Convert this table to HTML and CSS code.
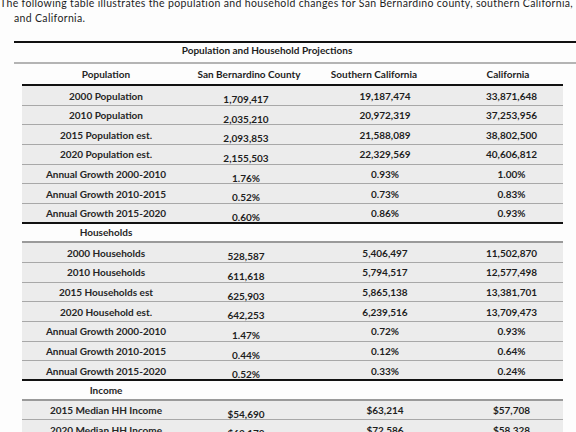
FILE: index.html
```html
<!DOCTYPE html>
<html lang="en">
<head>
    <meta charset="UTF-8">
    <meta name="viewport" content="width=device-width, initial-scale=1.0">
    <title>Population and Household Projections</title>
    <link rel="stylesheet" href="styles.css">
</head>
<body>
    <div class="page">
        <p class="intro">
            The following table illustrates the population and household changes for San Bernardino county, southern California,<br>
            and California.
        </p>

        <div class="rule-heavy"></div>
        <div class="title">Population and Household Projections</div>
        <div class="rule-grey"></div>

        <div class="table">
            <div class="row head">
                <div>Population</div>
                <div>San Bernardino County</div>
                <div>Southern California</div>
                <div>California</div>
            </div>

            <div class="row"><div>2000 Population</div><div>1,709,417</div><div>19,187,474</div><div>33,871,648</div></div>
            <div class="row"><div>2010 Population</div><div>2,035,210</div><div>20,972,319</div><div>37,253,956</div></div>
            <div class="row"><div>2015 Population est.</div><div>2,093,853</div><div>21,588,089</div><div>38,802,500</div></div>
            <div class="row"><div>2020 Population est.</div><div>2,155,503</div><div>22,329,569</div><div>40,606,812</div></div>
            <div class="row"><div>Annual Growth 2000-2010</div><div>1.76%</div><div>0.93%</div><div>1.00%</div></div>
            <div class="row"><div>Annual Growth 2010-2015</div><div>0.52%</div><div>0.73%</div><div>0.83%</div></div>
            <div class="row last"><div>Annual Growth 2015-2020</div><div>0.60%</div><div>0.86%</div><div>0.93%</div></div>

            <div class="row section"><div>Households</div></div>

            <div class="row"><div>2000 Households</div><div>528,587</div><div>5,406,497</div><div>11,502,870</div></div>
            <div class="row"><div>2010 Households</div><div>611,618</div><div>5,794,517</div><div>12,577,498</div></div>
            <div class="row"><div>2015 Households est</div><div>625,903</div><div>5,865,138</div><div>13,381,701</div></div>
            <div class="row"><div>2020 Household est.</div><div>642,253</div><div>6,239,516</div><div>13,709,473</div></div>
            <div class="row"><div>Annual Growth 2000-2010</div><div>1.47%</div><div>0.72%</div><div>0.93%</div></div>
            <div class="row"><div>Annual Growth 2010-2015</div><div>0.44%</div><div>0.12%</div><div>0.64%</div></div>
            <div class="row last"><div>Annual Growth 2015-2020</div><div>0.52%</div><div>0.33%</div><div>0.24%</div></div>

            <div class="row section"><div>Income</div></div>

            <div class="row"><div>2015 Median HH Income</div><div>$54,690</div><div>$63,214</div><div>$57,708</div></div>
            <div class="row"><div>2020 Median HH Income</div><div>$63,178</div><div>$72,586</div><div>$58,328</div></div>
        </div>
    </div>
</body>
</html>
```

FILE: styles.css
```css
* {
    margin: 0;
    padding: 0;
    box-sizing: border-box;
}

body {
    font-family: Lato, 'Open Sans', sans-serif;
    background: #fdfdfd;
    color: #1e1e1e;
    overflow: hidden;
}

.page {
    width: 576px;
    height: 432px;
    overflow: hidden;
}

.intro {
    margin-top: -4px;
    padding-left: 14px;
    font-size: 10.5px;
    line-height: 15px;
    letter-spacing: 0.34px;
    text-indent: -14px;
    white-space: nowrap;
    height: 30px;
}

.rule-heavy {
    margin: 15px 0 0 14px;
    height: 2px;
    background: #111;
}

.title {
    height: 19px;
    padding: 1px 56px 0 14px;
    text-align: center;
    font-size: 10px;
    font-weight: bold;
}

.rule-grey {
    margin-left: 14px;
    height: 2px;
    background: #b4b4b4;
}

.table {
    margin-left: 22px;
    width: 541px;
    font-size: 10px;
    font-weight: bold;
}

.row {
    display: grid;
    grid-template-columns: 168px 118px 132px 123px;
    height: 19.67px;
    background: #ececec;
    border-bottom: 1px solid #a8a8a8;
    align-items: center;
    text-align: center;
}

.row > div:nth-child(1) {
    color: #262626;
}

.row > div:nth-child(2) {
    padding: 7px 6px 0 0;
}

.row > div:nth-child(3) {
    padding-left: 22px;
}

.row > div:nth-child(4) {
    padding-left: 20px;
}

.row.head {
    height: 22px;
    background: transparent;
    border-bottom: 2px solid #111;
}

.row.head > div:nth-child(2) {
    padding: 0;
}

.row.head > div:nth-child(3) {
    padding-left: 0;
}

.row.head > div:nth-child(4) {
    padding-left: 13px;
}

.row.last {
    border-bottom: 2px solid #111;
}

.row.section {
    background: transparent;
    border-bottom: 2px solid #9a9a9a;
}
```
